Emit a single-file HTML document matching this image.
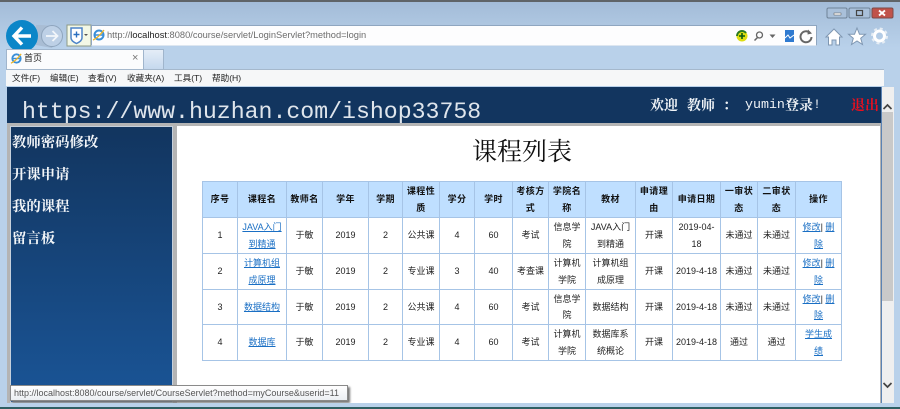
<!DOCTYPE html>
<html><head><meta charset="utf-8">
<style>
html,body{margin:0;padding:0}
body{width:900px;height:409px;overflow:hidden;position:relative;background:#b9d1ea;font-family:"Liberation Sans","Noto Sans CJK SC",sans-serif}
.a{position:absolute}
#chrome{left:0;top:0;width:900px;height:48px;background:linear-gradient(#a3bcd8,#b9d1ea);border-top:2px solid #5f6468;box-sizing:border-box}
#addr{left:91px;top:25px;width:726px;height:21px;background:#fdfdfe;border:1px solid #8fa6c0;box-sizing:border-box;border-bottom-color:#dde6f0}
#url{left:107px;top:29px;font-size:9.3px;line-height:13px;color:#6d6d6d;white-space:nowrap}
#url b{color:#222;font-weight:normal}
#tab{left:6px;top:49px;width:138px;height:20px;background:#fbfcfd;border:1px solid #a0b5cc;border-bottom:0;box-sizing:border-box}
#tab2{left:144px;top:49px;width:20px;height:20px;background:linear-gradient(#e4edf7,#c5d8ee);border:1px solid #a0b5cc;border-left:0;border-bottom:0;box-sizing:border-box}
#menu{left:6px;top:69px;width:878px;height:17px;background:#f6f7f8;border-top:1px solid #a5b8cc;box-sizing:border-box;font-size:8.6px;color:#222;white-space:nowrap}
#menu span{position:absolute;top:2px;line-height:13px}
#head{left:7px;top:87px;width:874px;height:36px;background:#12355f}
#site{left:22px;top:97px;font:23.2px/30px "Liberation Mono",monospace;color:#dfe5ec;white-space:nowrap;height:26px;overflow:hidden}
.w{position:absolute;top:95px;font:bold 14px/20px "Noto Serif CJK SC",serif;color:#eef2f6;white-space:nowrap}
.m{font:13.3px/20px "Liberation Mono",monospace}
#out{left:851px;top:95px;font:bold 14px/20px "Noto Serif CJK SC",serif;color:#ea0f1e}
#frame{left:7px;top:123px;width:874px;height:280px;background:#b4b4b4}
#side{left:10px;top:126px;width:163px;height:277px;background:linear-gradient(#12355f,#1a5597);border:1px solid #c5d0dc;box-sizing:border-box}
#side div{position:absolute;left:1px;color:#f2f5f8;font:bold 14.4px/20px "Noto Serif CJK SC",serif;white-space:nowrap}
#main{left:177px;top:126px;width:703px;height:277px;background:#fff}
#title{left:177px;top:131px;width:690px;text-align:center;font:25px/38px "Noto Serif CJK SC",serif;color:#111}
#sb{left:881px;top:87px;width:13px;height:316px;background:#efefef;border-left:1px solid #5b83b4;box-sizing:border-box}
#thumb{left:882px;top:112px;width:11px;height:189px;background:#c9c9c9}
table{position:absolute;left:202px;top:181px;width:639px;height:179px;border-collapse:collapse;table-layout:fixed;font-size:9px;color:#222;text-align:center}
td,th{border:1px solid #a6c4e6;padding:0;line-height:16.4px;font-weight:normal;overflow:hidden;white-space:nowrap}
th{background:#bfdfff;font-weight:bold;color:#111;letter-spacing:.4px}
a{color:#1a6fc4;text-decoration:underline}
#tip{left:10px;top:385px;width:338px;height:16px;background:linear-gradient(#fff,#eceff3);border:1px solid #8a8a8a;box-shadow:2px 2px 2px #777;box-sizing:border-box;font-size:9px;line-height:14px;color:#555;padding-left:3px;white-space:nowrap}
#bot{left:0;top:403px;width:900px;height:6px;background:#b9d1ea;border-bottom:2px solid #2f5f63;box-sizing:border-box}
</style></head>
<body>
<div class="a" id="chrome"></div>

<svg class="a" style="left:0;top:0" width="900" height="70" viewBox="0 0 900 70">
  <path d="M36 25 Q50 24 62 31 L52 48 L36 45Z" fill="#a9bdd4"/>
  <circle cx="22" cy="36" r="16" fill="#0b86c8"/>
  <path d="M14 36H31M22 27.500L14 36L22 44.500" fill="none" stroke="#fff" stroke-width="3.400"/>
  <circle cx="52" cy="36" r="10.500" fill="#bdd0e6" stroke="#8fa5bd"/>
  <path d="M46 36H57M52.500 31L57.500 36L52.500 41" fill="none" stroke="#f2f6fa" stroke-width="1.800"/>
  <rect x="67" y="25" width="24" height="21" fill="#f3f8e6" stroke="#8e9a86"/>
  <path d="M71 28H82V38Q82 41 76.500 43.500Q71 41 71 38Z" fill="#fff" stroke="#4c83c8" stroke-width="1.500"/>
  <path d="M73.500 34.500H79.500M76.500 31.500V37.500" stroke="#2a6fc0" stroke-width="1.400"/>
  <path d="M84 34H88L86 36Z" fill="#555"/>
</svg>
<div class="a" id="addr"></div>
<svg class="a" style="left:92px;top:28px" width="14" height="14" viewBox="0 0 14 14">
  <circle cx="7" cy="7" r="4.500" fill="none" stroke="#3a8fd8" stroke-width="2"/><path d="M3 7H11" stroke="#3a8fd8" stroke-width="1.500"/><path d="M1 12Q6 10 12 2" fill="none" stroke="#eeb422" stroke-width="1.300"/>
</svg>
<div class="a" id="url">http://<b>localhost</b>:8080/course/servlet/LoginServlet?method=login</div>

<svg class="a" style="left:730px;top:0" width="170" height="50" viewBox="730 0 170 50">
  <rect x="827" y="8" width="20" height="10" rx="1.500" fill="#a9c0da" stroke="#6f8398"/>
  <rect x="849" y="8" width="21" height="10" rx="1.500" fill="#a9c0da" stroke="#6f8398"/>
  <rect x="872" y="8" width="21" height="10" rx="1.500" fill="#c0524a" stroke="#7b4a48"/>
  <rect x="834" y="13" width="7" height="2" fill="#fff" stroke="#555" stroke-width=".5"/>
  <rect x="856.500" y="10.500" width="6" height="5" fill="none" stroke="#444" stroke-width="1.200"/>
  <path d="M879 10.500L885 15.500M885 10.500L879 15.500" stroke="#fff" stroke-width="1.800"/>
  <circle cx="742" cy="36" r="5.500" fill="#dede10"/><path d="M737 36a5 5 0 0 1 9-3" fill="none" stroke="#2a7a20" stroke-width="2"/>
  <path d="M739 36H745M742 33V39" stroke="#0a5a10" stroke-width="1.600"/>
  <circle cx="759.500" cy="35" r="3" fill="none" stroke="#666" stroke-width="1.300"/><path d="M757.500 37.500L754.500 40.500" stroke="#666" stroke-width="1.500"/>
  <path d="M769.500 34.500H775.500L772.500 38Z" fill="#666"/>
  <rect x="785" y="30" width="9" height="12" fill="#2f7ad0"/><path d="M785 38L788 35L790 38L794 35" stroke="#fff" fill="none"/>
  <path d="M810 33A5.500 5.500 0 1 0 811.500 37" fill="none" stroke="#666" stroke-width="2"/><path d="M808 29.500L812 33.500L807.500 34.500Z" fill="#666"/>
  <path d="M826 37L834 29L842 37H839.500V45H836V40H832V45H828.500V37Z" fill="#fff" stroke="#7f97b2"/>
  <path d="M857 28L859.500 34.300H865.500L860.700 38.300L862.500 44.500L857 41L851.500 44.500L853.300 38.300L848.500 34.300H854.500Z" fill="#fff" stroke="#7f97b2"/>
  <circle cx="879.500" cy="36" r="5" fill="none" stroke="#fff" stroke-width="3"/>
  <circle cx="879.500" cy="36" r="7.500" fill="none" stroke="#e6edf4" stroke-width="2" stroke-dasharray="3 2.890"/>
</svg>

<div class="a" id="tab"></div>
<svg class="a" style="left:10px;top:52px" width="13" height="13" viewBox="0 0 14 14">
  <circle cx="7" cy="7" r="4.500" fill="none" stroke="#3a8fd8" stroke-width="2"/><path d="M3 7H11" stroke="#3a8fd8" stroke-width="1.500"/><path d="M1 12Q6 10 12 2" fill="none" stroke="#eeb422" stroke-width="1.300"/>
</svg>
<div class="a" style="left:24px;top:52px;font-size:9px;line-height:13px;color:#222">首页</div>
<div class="a" style="left:132px;top:52px;font-size:11px;line-height:13px;color:#777">×</div>
<div class="a" id="tab2"></div>

<div class="a" id="menu">
  <span style="left:6px">文件(F)</span><span style="left:44px">编辑(E)</span><span style="left:82px">查看(V)</span><span style="left:121px">收藏夹(A)</span><span style="left:168px">工具(T)</span><span style="left:206px">帮助(H)</span>
</div>

<div class="a" id="head"></div>
<div class="a" id="frame"></div>
<div class="a" id="site">https://www.huzhan.com/ishop33758</div>
<div class="w" style="left:650px">欢迎</div>
<div class="w" style="left:687px">教师</div>
<div class="w" style="left:723px">：</div>
<div class="w m" style="left:745px">yumin</div>
<div class="w" style="left:785px">登录</div>
<div class="w m" style="left:813px">!</div>
<div class="a" id="out">退出</div>

<div class="a" id="side">
  <div style="top:5px">教师密码修改</div>
  <div style="top:37px">开课申请</div>
  <div style="top:69px">我的课程</div>
  <div style="top:101px">留言板</div>
</div>
<div class="a" id="main"></div>
<div class="a" id="title">课程列表</div>

<table>
<colgroup><col style="width:35px"><col style="width:49px"><col style="width:36px"><col style="width:46px"><col style="width:34px"><col style="width:37px"><col style="width:35px"><col style="width:38px"><col style="width:36px"><col style="width:37px"><col style="width:50px"><col style="width:37px"><col style="width:48px"><col style="width:37px"><col style="width:38px"><col style="width:46px"></colgroup>
<tr style="height:36px"><th>序号</th><th>课程名</th><th>教师名</th><th>学年</th><th>学期</th><th>课程性<br>质</th><th>学分</th><th>学时</th><th>考核方<br>式</th><th>学院名<br>称</th><th>教材</th><th>申请理<br>由</th><th>申请日期</th><th>一审状<br>态</th><th>二审状<br>态</th><th>操作</th></tr>
<tr style="height:36px"><td>1</td><td><a>JAVA入门<br>到精通</a></td><td>于敏</td><td>2019</td><td>2</td><td>公共课</td><td>4</td><td>60</td><td>考试</td><td>信息学<br>院</td><td>JAVA入门<br>到精通</td><td>开课</td><td>2019-04-<br>18</td><td>未通过</td><td>未通过</td><td><a>修改</a>| <a>删<br>除</a></td></tr>
<tr style="height:36px"><td>2</td><td><a>计算机组<br>成原理</a></td><td>于敏</td><td>2019</td><td>2</td><td>专业课</td><td>3</td><td>40</td><td>考查课</td><td>计算机<br>学院</td><td>计算机组<br>成原理</td><td>开课</td><td>2019-4-18</td><td>未通过</td><td>未通过</td><td><a>修改</a>| <a>删<br>除</a></td></tr>
<tr style="height:35px"><td>3</td><td><a>数据结构</a></td><td>于敏</td><td>2019</td><td>2</td><td>公共课</td><td>4</td><td>60</td><td>考试</td><td>信息学<br>院</td><td>数据结构</td><td>开课</td><td>2019-4-18</td><td>未通过</td><td>未通过</td><td><a>修改</a>| <a>删<br>除</a></td></tr>
<tr style="height:36px"><td>4</td><td><a>数据库</a></td><td>于敏</td><td>2019</td><td>2</td><td>专业课</td><td>4</td><td>60</td><td>考试</td><td>计算机<br>学院</td><td>数据库系<br>统概论</td><td>开课</td><td>2019-4-18</td><td>通过</td><td>通过</td><td><a>学生成<br>绩</a></td></tr>
</table>

<div class="a" id="sb"></div>
<div class="a" id="thumb"></div>
<svg class="a" style="left:882px;top:98px" width="11" height="300" viewBox="0 0 11 300">
  <path d="M1.500 11L5.500 7L9.500 11" fill="none" stroke="#444" stroke-width="1.700"/>
  <path d="M1.500 285L5.500 289L9.500 285" fill="none" stroke="#444" stroke-width="1.700"/>
</svg>

<div class="a" id="tip">http://localhost:8080/course/servlet/CourseServlet?method=myCourse&amp;userid=11</div>
<div class="a" id="bot"></div>
</body></html>
